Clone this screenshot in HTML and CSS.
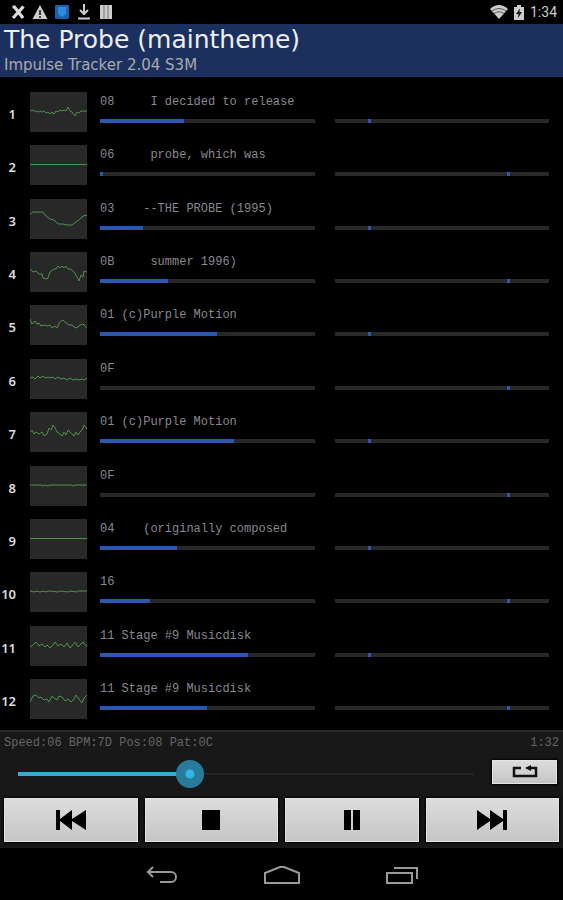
FILE: index.html
```html
<!DOCTYPE html>
<html lang="en">
<head>
  <meta charset="UTF-8">
  <title>The Probe (maintheme)</title>
  <meta name="viewport" content="width=device-width, initial-scale=1.0">
  <link rel="stylesheet" href="styles.css">
</head>
<body>
  <!-- System status bar -->
  <div class="status-bar">
    <div class="status-icons">
      <svg width="16" height="16" viewBox="0 0 16 16"><path d="M2.500 3h2L13 14M13.500 2.500L3 14" fill="none" stroke="#ddd" stroke-width="3.200"/></svg>
      <svg width="16" height="16" viewBox="0 0 16 16"><path d="M8 1l7.500 14H.5z" fill="#ccc"/><path d="M8 6v5M8 12v2" stroke="#111" stroke-width="1.500"/></svg>
      <svg width="16" height="16" viewBox="0 0 16 16"><rect x="1" y="1" width="14" height="14" rx="1" fill="#1b62ad"/><path d="M4 3h8v7l-4 3-4-3z" fill="#2f8ae0"/></svg>
      <svg width="16" height="16" viewBox="0 0 16 16"><path d="M8 0v9M4 6l4 4 4-4M2 14.500h12" fill="none" stroke="#ccc" stroke-width="2"/></svg>
      <svg width="16" height="16" viewBox="0 0 16 16"><path d="M2 1h12v14H2z" fill="#ccc"/><path d="M6 1v14M10 1v14" stroke="#777" stroke-width="1"/></svg>
    </div>
    <div class="status-right">
      <svg width="18" height="14" viewBox="0 0 18 14"><path d="M0 4Q9-4 18 4L9 14z" fill="#ccc"/><path d="M2 6Q9 1 16 6M4 8.500Q9 5 14 8.500" fill="none" stroke="#555" stroke-width="1"/></svg>
      <svg width="10" height="15" viewBox="0 0 10 15"><path d="M3 0h4v2h3v13H0V2h3z" fill="#ccc"/><path d="M6 3.500L2 9h2.500L4 13l4-6H5.500z" fill="#111"/></svg>
      <span>1:34</span>
    </div>
  </div>

  <header>
    <h1>The Probe (maintheme)</h1>
    <p>Impulse Tracker 2.04 S3M</p>
  </header>

  <!-- Channels, filled in below -->
  <main>
    <ol class="channels" id="channels"></ol>
  </main>

  <!-- Player controls -->
  <section class="player">
    <div class="info">
      <span>Speed:06 BPM:7D Pos:08 Pat:0C</span>
      <span>1:32</span>
    </div>
    <div class="seek-row">
      <input class="seek" type="range" min="0" max="100" value="37" aria-label="Position">
      <button class="loop" type="button" aria-label="Loop">
        <svg width="26" height="14" viewBox="0 0 26 14"><path d="M9 3H2v8h22V3h-6" fill="none" stroke="#111" stroke-width="2.500"/><path d="M19 0v6l-6-3z" fill="#111"/></svg>
      </button>
    </div>
    <div class="buttons">
      <button type="button" aria-label="Previous">
        <svg width="30" height="20" viewBox="0 0 30 20"><path d="M0 0h4v9L16 0v9L30 0v20L16 11v9L4 11v9H0z"/></svg>
      </button>
      <button type="button" aria-label="Stop">
        <svg width="18" height="20" viewBox="0 0 18 20"><path d="M0 0h18v20H0z"/></svg>
      </button>
      <button type="button" aria-label="Pause">
        <svg width="16" height="20" viewBox="0 0 16 20"><path d="M0 0h7v20H0zM9 0h7v20H9z"/></svg>
      </button>
      <button type="button" aria-label="Next">
        <svg width="30" height="20" viewBox="0 0 30 20"><path d="M30 0h-4v9L13 0v9L0 0v20l13-9v9l13-9v9h4z"/></svg>
      </button>
    </div>
  </section>

  <nav class="nav-bar">
    <button type="button" aria-label="Back">
      <svg width="32" height="20" viewBox="0 0 32 20"><path d="M7 2L2 7l5 5M2 7h23a5 5 0 0 1 0 10H14"/></svg>
    </button>
    <button type="button" aria-label="Home">
      <svg width="36" height="20" viewBox="0 0 36 20"><path d="M1 18V8l15-6h4l15 6v10z"/></svg>
    </button>
    <button type="button" aria-label="Recent apps">
      <svg width="34" height="20" viewBox="0 0 34 20"><path d="M2 8h25v10H2zM9 3h23v11"/></svg>
    </button>
  </nav>

  <script>
    // text is the instrument line, vol and pan are percentages
    const channels = [
      { text: '08     I decided to release', vol: 39, pan: 15.5, wave: '0,19 2,18 4,19 6,19 8,20 10,19 12,20 14,19 16,21 18,20 20,22 22,20 24,22 26,19 28,20 30,18 32,19 34,18 36,19 38,15 40,19 42,20 45,24 47,20 49,21 51,19 54,19 57,19' },
      { text: '06     probe, which was', vol: 1.5, pan: 80.5, wave: '0,19.5 57,19.5' },
      { text: '03    --THE PROBE (1995)', vol: 20, pan: 15.5, wave: '0,15 3,13 13,13 16,17 20,20 24,21 28,25 33,25 36,26 42,26 46,23 50,20 53,17 57,16' },
      { text: '0B     summer 1996)', vol: 31.5, pan: 80.5, wave: '0,17 3,20 6,19 9,22 12,22 13,26 16,27 18,26 20,20 24,17 26,17 28,14 30,16 32,14 34,16 36,14 38,17 41,17 44,20 47,25 49,29 51,23 53,25 54,19 57,20' },
      { text: '01 (c)Purple Motion', vol: 54.5, pan: 15.5, wave: '0,14 2,19 5,16 7,19 9,18 11,21 14,20 17,21 20,20 22,23 25,21 27,23 29,18 31,16 33,15 36,18 39,20 42,20 44,22 47,23 50,20 53,19 57,23' },
      { text: '0F', vol: 0, pan: 80.5, wave: '0,19 3,18 5,20 8,17 10,19 13,17 15,19 18,18 20,19 23,18 25,20 28,18 31,20 34,19 37,21 40,19 43,21 46,20 49,21 52,20 54,21 57,19' },
      { text: '01 (c)Purple Motion', vol: 62.5, pan: 15.5, wave: '0,20 2,18 4,22 6,20 9,22 12,20 14,24 17,22 19,16 21,18 23,13 25,16 27,20 30,22 32,24 34,20 36,23 38,18 40,20 42,22 44,24 46,20 48,23 50,20 52,18 54,13 57,17' },
      { text: '0F', vol: 0, pan: 80.5, wave: '0,19 11,19 13,20 15,19 18,20 20,19 41,19 43,20 45,19 57,19' },
      { text: '04    (originally composed', vol: 36, pan: 15.5, wave: '0,19.5 57,19.5' },
      { text: '16', vol: 23.5, pan: 80.5, wave: '0,19 4,20 7,19 10,20 13,19 16,20 19,19 28,20 30,19 38,20 41,19 46,20 48,19 57,19' },
      { text: '11 Stage #9 Musicdisk', vol: 69, pan: 15.5, wave: '0,21 3,19 6,16 9,20 12,18 15,21 17,19 20,22 22,20 25,16 28,20 31,18 34,21 37,17 40,22 42,20 45,16 48,21 51,18 53,16 57,21' },
      { text: '11 Stage #9 Musicdisk', vol: 50, pan: 80.5, wave: '0,23 3,17 6,16 9,19 11,18 14,21 17,20 19,23 22,17 24,19 27,21 29,17 32,18 35,22 38,20 41,23 44,20 46,16 49,20 52,24 54,19 57,16' }
    ];

    document.getElementById('channels').innerHTML = channels.map((ch, i) => `
      <li class="channel">
        <span class="num">${i + 1}</span>
        <svg class="scope" viewBox="0 0 57 40"><polyline points="${ch.wave}"/></svg>
        <div class="levels">
          <div class="volume">
            <div class="instrument">${ch.text}</div>
            <div class="bar"><div class="fill" style="width: ${ch.vol}%"></div></div>
          </div>
          <div class="pan">
            <div class="bar"><div class="mark" style="margin-left: ${ch.pan}%"></div></div>
          </div>
        </div>
      </li>`).join('');

    // keep the played part of the track under the thumb
    const seek = document.querySelector('.seek');
    function paintSeek() {
      seek.style.setProperty('--played', seek.value + '%');
    }
    seek.addEventListener('input', paintSeek);
    paintSeek();
  </script>
</body>
</html>
```

FILE: styles.css
```css
* {
  box-sizing: border-box;
}
body {
  margin: 0;
  min-height: 100vh;
  display: flex;
  flex-direction: column;
  background: #000;
  color: #ddd;
  font-family: Roboto, sans-serif;
}
svg {
  display: block;
}
button {
  padding: 0;
  border: none;
  display: flex;
  align-items: center;
  justify-content: center;
  cursor: pointer;
}

/* Status bar */
.status-bar {
  height: 24px;
  padding: 0 6px 0 10px;
  display: flex;
  justify-content: space-between;
  align-items: center;
}
.status-icons {
  display: flex;
  gap: 6px;
}
.status-right {
  display: flex;
  align-items: center;
  gap: 6px;
  font-size: 14px;
  color: #ccc;
}

/* Module title */
header {
  height: 53px;
  padding: 0 4px;
  background: #1b305f;
  font-family: 'DejaVu Sans', sans-serif;
  white-space: nowrap;
}
header h1 {
  margin: 0;
  font-size: 25px;
  line-height: 32px;
  font-weight: 400;
  color: #eee;
}
header p {
  margin: 0;
  font-size: 15px;
  line-height: 18px;
  color: #aaa;
}

/* Channel list */
main {
  flex: 1;
  display: flex;
}
.channels {
  flex: 1;
  margin: 0;
  padding: 8px 14px 4px 0;
  list-style: none;
  display: grid;
  grid-auto-rows: 1fr;
}
.channel {
  display: grid;
  grid-template-columns: 16px 56px 1fr;
  column-gap: 14px;
  align-items: center;
}
.num {
  padding-top: 4px;
  display: flex;
  justify-content: flex-end;
  font-family: 'Noto Sans', sans-serif;
  font-size: 13px;
  line-height: 16px;
  font-weight: 600;
}
.scope {
  width: 57px;
  height: 40px;
  background: #282828;
}
.scope polyline {
  fill: none;
  stroke: #4c9150;
  stroke-width: 1;
}
.levels {
  display: grid;
  grid-template-columns: 1fr 1fr;
  column-gap: 20px;
  align-items: end;
  padding-bottom: 6px;
}
.instrument {
  margin-bottom: 10px;
  font-family: 'Liberation Mono', monospace;
  font-size: 12px;
  line-height: 14px;
  color: #888890;
  white-space: pre;
}
.bar {
  height: 4px;
  background: #282828;
}
.fill,
.mark {
  height: 4px;
  background: #2b57b0;
}
.bar .mark {
  width: 3px;
}

/* Player controls */
.player {
  padding: 4px 4px 6px;
  border-top: 2px solid #282828;
  background: #181818;
}
.info {
  display: flex;
  justify-content: space-between;
  font-family: 'Liberation Mono', monospace;
  font-size: 12px;
  line-height: 14px;
  color: #666;
}
.seek-row {
  margin: 10px 0;
  padding: 0 2px 0 14px;
  display: flex;
  align-items: flex-start;
  gap: 18px;
}
.seek {
  flex: 1;
  min-width: 0;
  height: 28px;
  margin: 0;
  appearance: none;
  background: none;
}
.seek::-webkit-slider-runnable-track {
  height: 28px;
  background:
    linear-gradient(to right, #39a9d6 var(--played), transparent var(--played)) center / 100% 4px no-repeat,
    linear-gradient(#242424, #242424) center / 100% 2px no-repeat;
}
.seek::-webkit-slider-thumb {
  appearance: none;
  width: 28px;
  height: 28px;
  border-radius: 50%;
  background: radial-gradient(circle, #33b5e5 4px, #2a7b9b 5px);
}
.loop,
.buttons button {
  background: linear-gradient(to bottom, #dcdcdc, #c6c6c6);
  border: 1px solid #e4e4e4;
  box-shadow: 0 0 2px 1px #000;
}
.loop {
  width: 65px;
  height: 24px;
}
.buttons {
  display: grid;
  grid-template-columns: repeat(4, 1fr);
  gap: 7px;
}
.buttons button {
  height: 44px;
}

/* System navigation */
.nav-bar {
  height: 52px;
  padding-top: 2px;
  display: flex;
  justify-content: center;
}
.nav-bar button {
  width: 120px;
  background: none;
}
.nav-bar path {
  fill: none;
  stroke: #999;
  stroke-width: 2;
}
```
